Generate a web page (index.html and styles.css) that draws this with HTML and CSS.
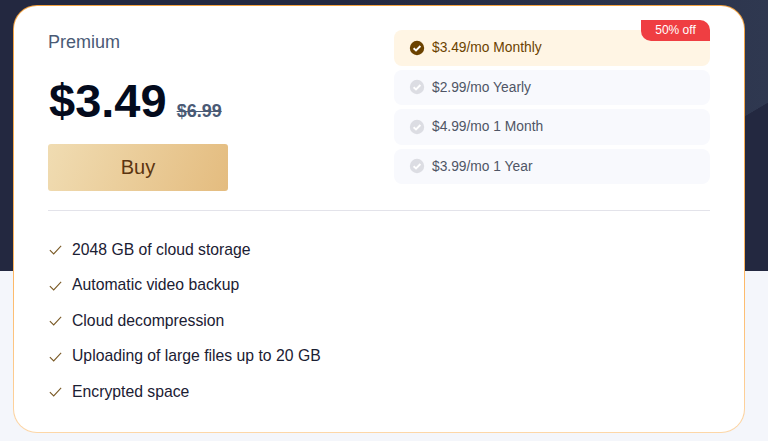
FILE: index.html
```html
<!DOCTYPE html>
<html lang="en">
<head>
<meta charset="utf-8">
<title>Premium</title>
<link rel="stylesheet" href="styles.css">
</head>
<body>
<main class="page">
  <section class="card">
    <div class="top">
      <div class="summary">
        <div class="plan">Premium</div>
        <div class="prices">
          <span class="price">$3.49</span>
          <span class="old">$6.99</span>
        </div>
        <button class="buy">Buy</button>
      </div>
      <ul class="options">
        <li class="option active">
          <svg class="dot" viewBox="0 0 16 16"><circle cx="8" cy="8" r="7.2" fill="#6b4200"/><path d="M4.6 8.2 7 10.4 11.4 6" fill="none" stroke="#fff" stroke-width="1.9"/></svg>
          <span>$3.49/mo Monthly</span>
          <span class="badge">50% off</span>
        </li>
        <li class="option">
          <svg class="dot" viewBox="0 0 16 16"><circle cx="8" cy="8" r="7.2" fill="#dcdde3"/><path d="M4.6 8.2 7 10.4 11.4 6" fill="none" stroke="#fff" stroke-width="1.9"/></svg>
          <span>$2.99/mo Yearly</span>
        </li>
        <li class="option">
          <svg class="dot" viewBox="0 0 16 16"><circle cx="8" cy="8" r="7.2" fill="#dcdde3"/><path d="M4.6 8.2 7 10.4 11.4 6" fill="none" stroke="#fff" stroke-width="1.9"/></svg>
          <span>$4.99/mo 1 Month</span>
        </li>
        <li class="option">
          <svg class="dot" viewBox="0 0 16 16"><circle cx="8" cy="8" r="7.2" fill="#dcdde3"/><path d="M4.6 8.2 7 10.4 11.4 6" fill="none" stroke="#fff" stroke-width="1.9"/></svg>
          <span>$3.99/mo 1 Year</span>
        </li>
      </ul>
    </div>
    <ul class="features">
      <li><svg class="tick" viewBox="0 0 14 11"><path d="M.8 5.6 5 9.8 13.2 1" fill="none" stroke="#7a5a26" stroke-width="1.2"/></svg>2048 GB of cloud storage</li>
      <li><svg class="tick" viewBox="0 0 14 11"><path d="M.8 5.6 5 9.8 13.2 1" fill="none" stroke="#7a5a26" stroke-width="1.2"/></svg>Automatic video backup</li>
      <li><svg class="tick" viewBox="0 0 14 11"><path d="M.8 5.6 5 9.8 13.2 1" fill="none" stroke="#7a5a26" stroke-width="1.2"/></svg>Cloud decompression</li>
      <li><svg class="tick" viewBox="0 0 14 11"><path d="M.8 5.6 5 9.8 13.2 1" fill="none" stroke="#7a5a26" stroke-width="1.2"/></svg>Uploading of large files up to 20 GB</li>
      <li><svg class="tick" viewBox="0 0 14 11"><path d="M.8 5.6 5 9.8 13.2 1" fill="none" stroke="#7a5a26" stroke-width="1.2"/></svg>Encrypted space</li>
    </ul>
  </section>
</main>
</body>
</html>
```
FILE: styles.css
```css
* { box-sizing: border-box; }
html, body { margin: 0; height: 100%; }
body {
  font-family: "Liberation Sans", Arial, sans-serif;
  overflow: hidden;
}
.page {
  height: 441px;
  padding: 5px 23px 0 13px;
  background:
    linear-gradient(149.4deg, transparent 0 479px, #232840 479.5px) 0 0 / 100% 271px no-repeat,
    linear-gradient(90deg, #232840 0, #232840 45%, #2f3850 100%) 0 0 / 100% 271px no-repeat,
    #f4f6fb;
}
.card {
  width: 732px;
  height: 428px;
  padding: 21px 34px 0;
  border: 1px solid transparent;
  border-radius: 24px;
  background:
    linear-gradient(#fff, #fff) padding-box,
    linear-gradient(180deg, #f2a13f 0%, #fdb55f 60%, #fdd7a8 100%) border-box;
}
.top {
  display: flex;
  justify-content: space-between;
  height: 184px;
  border-bottom: 1px solid #e3e3ea;
}
.summary { width: 180px; }
.plan {
  margin-top: 4px;
  font-size: 18px;
  line-height: 22px;
  color: #4a5a75;
}
.prices {
  display: flex;
  align-items: baseline;
  margin-top: 20px;
  white-space: nowrap;
}
.price {
  font-size: 47px;
  line-height: 56px;
  font-weight: 700;
  color: #040b1d;
  padding-left: 1px;
}
.old {
  margin-left: 10px;
  font-size: 18px;
  font-weight: 700;
  color: #4a5a75;
  text-decoration: line-through;
}
.buy {
  display: block;
  width: 180px;
  height: 47px;
  margin-top: 15px;
  border: 0;
  border-radius: 3px;
  font: 20px "Liberation Sans", Arial, sans-serif;
  color: #5b3510;
  background: linear-gradient(110deg, #f0dcb2 0%, #e4bc7f 100%);
}
.options {
  list-style: none;
  margin: 3px 0 0;
  padding: 0;
  width: 316px;
  display: flex;
  flex-direction: column;
  gap: 4px;
}
.option {
  position: relative;
  display: flex;
  align-items: center;
  gap: 7px;
  height: 35.5px;
  padding: 0 0 .4px 15px;
  border-radius: 8px;
  font-size: 13.8px;
  color: #4f5565;
  background: #f8f9fd;
}
.option.active {
  color: #6b4200;
  background: #fff5e4;
}
.dot { width: 16px; height: 16px; flex: none; }
.badge {
  position: absolute;
  top: -10px;
  right: 0;
  width: 69px;
  height: 21px;
  border-radius: 0 10px 0 10px;
  font-size: 12px;
  line-height: 21px;
  text-align: center;
  color: #fff;
  background: #ef3e42;
}
.features {
  list-style: none;
  margin: 28.5px 0 0;
  padding: 0;
  display: flex;
  flex-direction: column;
  gap: 15.6px;
}
.features li {
  display: flex;
  align-items: center;
  gap: 10px;
  height: 20px;
  font-size: 15.75px;
  color: #1b2033;
}
.tick { width: 13px; height: 10px; flex: none; margin: 1px 0 0 1px; }
```
